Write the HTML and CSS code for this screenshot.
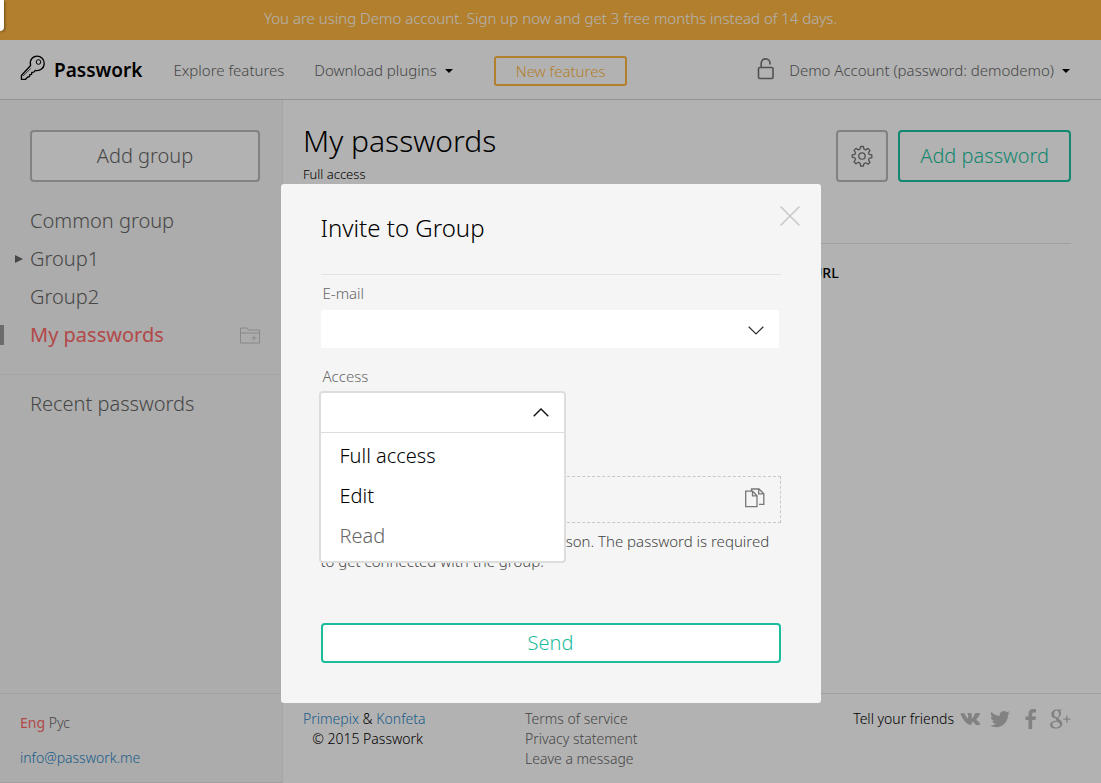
FILE: index.html
```html
<!DOCTYPE html>
<html lang="en">
<head>
<meta charset="utf-8">
<title>Passwork</title>
<link rel="stylesheet" href="styles.css">
</head>
<body>
<div class="promo">You are using Demo account. Sign up now and get 3 free months instead of 14 days.</div>

<header class="header">
  <a class="brand" href="#">
    <svg class="brand-icon" width="26" height="26" viewBox="0 0 26 26" fill="none" stroke="#000" stroke-width="1.3" stroke-linejoin="round"><path d="M10.600 10.500C9.200 5.500 12.500 1.200 17 1.200c4.200 0 7.200 3.100 7.200 7.200 0 4.800-4.200 8-8.900 6.900l-1.500 1.800-2 .2-.2 2.100-1.900.3-.2 2-1.800.3-2.100 2.300H1.400v-3.800z"/><circle cx="18.500" cy="7" r="2.300" stroke-width="1"/><path d="M10.800 13.300 3 21.200" stroke-width=".7"/></svg>
    <span>Passwork</span>
  </a>
  <nav class="nav">
    <a href="#">Explore features</a>
    <a class="with-caret" href="#">Download plugins</a>
  </nav>
  <a class="new-features" href="#">New features</a>
  <div class="account">
    <svg class="lock" width="18" height="22" viewBox="0 0 18 22" fill="none" stroke="#757575" stroke-width="1.600"><rect x="1.500" y="9.500" width="14.500" height="11" rx="1.200"/><path d="M4.200 9.500V5.300a4.400 4.400 0 0 1 8.800 0v1.300"/></svg>
    <a class="with-caret" href="#">Demo Account (password: demodemo)</a>
  </div>
</header>

<div class="body">
  <aside class="sidebar">
    <button class="btn add-group" type="button">Add group</button>
    <ul class="groups">
      <li><a href="#">Common group</a></li>
      <li class="has-children"><a href="#">Group1</a></li>
      <li><a href="#">Group2</a></li>
      <li class="active"><a href="#">My passwords</a>
        <button class="icon-button" type="button" aria-label="Add folder"><svg width="22" height="17" viewBox="0 0 22 17" fill="none" stroke="#c4c4c4"><path d="M1.500 16v-15h6.500l1.500 2h11v13z M1.500 6h19"/><path d="M12.500 11h5M15 8.500v5"/></svg></button>
      </li>
    </ul>
    <ul class="groups recent">
      <li><a href="#">Recent passwords</a></li>
    </ul>
  </aside>
  <main class="main">
    <div class="title-row">
      <div class="title-block">
        <h1>My passwords</h1>
        <p>Full access</p>
      </div>
      <button class="btn gear" type="button" aria-label="Group settings">
        <svg width="22" height="22" viewBox="0 0 22 22" fill="none" stroke="#757575" stroke-width="1.300" stroke-linejoin="round"><circle cx="11" cy="11" r="3.200"/><path d="M9.600 1.500h2.800l.6 2.700 1.700.7 2.300-1.500 2 2-1.500 2.300.7 1.700 2.600.5v2.800l-2.600.6-.7 1.700 1.500 2.300-2 2-2.300-1.500-1.700.7-.6 2.500H9.600L9 18l-1.700-.7L5 18.800l-2-2 1.500-2.300-.7-1.700-2.600-.6V9.900l2.600-.5.700-1.700L3 5.400l2-2 2.300 1.500L9 4.200z"/></svg>
      </button>
      <button class="btn btn-green" type="button">Add password</button>
    </div>
    <table class="passwords">
      <thead><tr><th>Name</th><th>Login</th><th>URL</th></tr></thead>
    </table>
  </main>
</div>

<footer class="footer">
  <div class="footer-side">
    <p class="langs"><a class="lang-active" href="#">Eng</a> <a href="#">Рус</a></p>
    <p><a class="blue" href="#">info@passwork.me</a></p>
  </div>
  <div class="footer-main">
    <div class="copyright"><a class="blue" href="#">Primepix</a> &amp; <a class="blue" href="#">Konfeta</a><br>© 2015 Passwork</div>
    <ul class="legal">
      <li><a href="#">Terms of service</a></li>
      <li><a href="#">Privacy statement</a></li>
      <li><a href="#">Leave a message</a></li>
    </ul>
    <div class="share">
      <span>Tell your friends</span>
      <a href="#" aria-label="VK"><svg width="20" height="14" viewBox="0 0 20 14"><path d="M9.700 12.800h1.200s.4 0 .6-.3c.2-.2.200-.6.200-.6s0-1.800.8-2.100 1.900 1.800 3 2.600c.9.600 1.500.5 1.500.5h2.100s1.500-.1.800-1.300c-.1-.1-.4-.9-2.200-2.500-1.800-1.700-1.600-1.400.6-4.400 1.300-1.800 1.900-2.900 1.700-3.300-.1-.4-1.200-.3-1.200-.3h-3s-.3 0-.5.1-.3.400-.3.400-.5 1.300-1.100 2.400C12.600 6.100 12.200 6.300 12 6.200c-.5-.3-.3-1.200-.3-1.900 0-2 .3-2.900-.6-3.100-.3-.1-.5-.1-1.300-.1-1 0-1.800 0-2.300.2-.3.200-.6.500-.4.500.2 0 .6.100.8.400.3.400.3 1.300.3 1.300s.2 2.400-.4 2.700c-.4.200-.9-.2-2-2.200-.6-1-1-2.100-1-2.100s-.1-.2-.3-.4c-.2-.1-.5-.2-.5-.2H1.200s-.4 0-.6.200c-.2.200 0 .5 0 .5s2.200 5.300 4.800 8c2.300 2.600 4.300 2.800 4.300 2.800z"/></svg></a>
      <a href="#" aria-label="Twitter"><svg width="20" height="18" viewBox="0 0 20 18"><path d="M20 2.900c-.7.300-1.500.5-2.400.6.900-.5 1.500-1.300 1.800-2.200-.8.500-1.700.8-2.600 1A4.100 4.100 0 0 0 9.800 6C6.400 5.900 3.400 4.200 1.400 1.800.3 3.600.8 6 2.700 7.200c-.7 0-1.300-.2-1.900-.5 0 2 1.400 3.700 3.300 4.100-.6.200-1.200.2-1.900.1.500 1.600 2 2.800 3.800 2.800A8.200 8.200 0 0 1 0 15.400a11.600 11.600 0 0 0 6.300 1.800c7.500 0 11.900-6.400 11.600-12.200.8-.6 1.500-1.300 2.100-2.100z"/></svg></a>
      <a href="#" aria-label="Facebook"><svg width="20" height="20" viewBox="-5 0 20 20"><path d="M3.500 20v-9H.5V7.500h3V5C3.500 1.800 5.300 0 8.200 0c1.300 0 2.500.1 2.800.2v3.300H9C7.500 3.500 7.200 4.200 7.200 5.300v2.200H11L10.500 11H7.200v9z"/></svg></a>
      <a href="#" aria-label="Google Plus"><svg width="21" height="20" viewBox="0 0 21 20"><path fill-rule="evenodd" d="M12 .5H6.800C3.800.5 1.300 2.400 1.300 5.200c0 2.700 2.100 4.400 4.900 4.300-.4.900-.2 1.600.5 2.200C2.800 11.800 0 13.300 0 15.700c0 2.500 2.700 3.900 6 3.900 3.800 0 6.300-2.100 6.300-4.800 0-2.200-1.200-3.300-3-4.500-1.200-.8-1.300-1.300-.3-2.100 1.300-1 2-2.200 2-3.700 0-1.300-.4-2.200-1.200-2.800h1.200zM6.500 1.500c2.900.3 3.700 6.500.5 6.900-3.300-.1-4.200-6.300-.5-6.900zM7.300 12.800c1.900 1.200 2.700 1.700 2.700 3 0 1.500-1.300 2.600-3.600 2.600-2.400 0-4-1.200-4-2.900 0-1.900 2.200-2.900 4.900-2.700z"/><path d="M16.200 6.500h1.300v3h3v1.300h-3v3h-1.300v-3h-3V9.500h3z"/></svg></a>
    </div>
  </div>
</footer>

<div class="overlay">
  <form class="modal" role="dialog" aria-labelledby="modal-title">
    <button class="close" type="button" aria-label="Close"><svg width="20" height="20" viewBox="0 0 20 20" stroke="#c5c5c5" stroke-width="1.400"><path d="M.5.500l19 19M19.500.500l-19 19"/></svg></button>
    <h2 id="modal-title">Invite to Group</h2>
    <label for="email">E-mail</label>
    <div class="email-box">
      <input id="email" type="text">
      <button class="icon-button" type="button" aria-label="Show contacts"><svg width="16" height="11" viewBox="0 0 16 11" fill="none" stroke="#333" stroke-width="1.300"><path d="M.7 2.700 8 9.900l7.300-7.200"/></svg></button>
    </div>
    <label for="access">Access</label>
    <div class="access">
      <div class="access-menu">
        <div class="access-head">
          <select id="access"><option></option><option>Full access</option><option>Edit</option><option>Read</option></select>
          <svg width="16" height="9" viewBox="0 0 16 9" fill="none" stroke="#111" stroke-width="1.400"><path d="M.7 8.300 8 1.100l7.300 7.200"/></svg>
        </div>
        <ul role="listbox" aria-label="Access">
          <li role="option">Full access</li>
          <li role="option">Edit</li>
          <li role="option" class="muted">Read</li>
        </ul>
      </div>
    </div>
    <div class="secret">
      <button class="icon-button" type="button" aria-label="Copy"><svg width="20" height="20" viewBox="0 0 20 20" fill="none" stroke="#777" stroke-width="1.300"><path d="M.7 3.200h7l4.300 4.500v10.900H.7zM7.500 3.200v4.700H12M6.500 3V1H14l4.800 4.800v10.500H14M13.700 1v4.900h5"/></svg></button>
    </div>
    <p class="hint">Send the password to an invited person. The password is required to get connected with the group.</p>
    <button class="send" type="submit">Send</button>
  </form>
</div>
<div class="corner-tab"></div>
</body>
</html>
```
FILE: styles.css
```css
* { box-sizing: border-box; }

body {
  margin: 0;
  min-height: 100vh;
  display: flex;
  flex-direction: column;
  background: #fff;
  color: #000;
  font: 300 15px/20px "Noto Sans", sans-serif;
}

a { color: #666; text-decoration: none; }
button, input, select { font: inherit; color: inherit; }
button { cursor: pointer; }
h1, h2, p, ul { margin: 0; padding: 0; font-weight: 300; }
ul { list-style: none; }
svg { display: block; }

.blue { color: #2a86c8; }

.promo {
  padding: 8px 20px 12px;
  background: #ffb740;
  color: #fff;
  text-align: center;
}

.header {
  display: flex;
  align-items: center;
  height: 60px;
  padding: 0 31px 0 20px;
  border-bottom: 1px solid #d4d4d4;
}

.brand {
  display: flex;
  align-items: center;
  gap: 8px;
  color: #000;
  font-size: 19px;
  font-weight: 600;
}

.brand-icon { margin-bottom: 4px; }

.nav { display: flex; gap: 30px; margin-left: 31px; }

.with-caret { display: flex; align-items: center; gap: 8px; }
.with-caret::after {
  content: "";
  margin-top: 3px;
  border: 4px solid transparent;
  border-top-color: #000;
  border-bottom: 0;
}

.new-features {
  margin: 2px 0 0 41px;
  padding: 3px 20px;
  border: 2px solid #ffb740;
  border-radius: 3px;
  color: #ffb740;
}

.account { display: flex; align-items: center; gap: 14px; margin-left: auto; }
.lock { margin-bottom: 2px; }

.body { flex: 1; display: flex; }

.sidebar {
  width: 283px;
  padding-top: 30px;
  background: #f6f6f6;
  border-right: 1px solid #ededed;
}

.btn {
  height: 52px;
  background: #fff;
  border: 2px solid #bababa;
  border-radius: 4px;
  color: #666;
  font-size: 20px;
}

.add-group { display: block; width: 230px; margin: 0 0 20px 30px; }

.groups { padding-bottom: 20px; font-size: 20px; line-height: 38px; }
.groups li { position: relative; display: flex; align-items: center; padding: 0 21px 0 30px; }
.groups a { flex: 1; }
.groups .active a { color: #ff6969; font-weight: 400; }
.groups .active::before {
  content: "";
  position: absolute;
  left: 0;
  width: 4px;
  height: 20px;
  background: #9b9b9b;
}
.has-children::before {
  content: "";
  position: absolute;
  left: 15px;
  border: 4px solid transparent;
  border-left: 8px solid #666;
  border-right: 0;
}
.recent { padding-top: 10px; border-top: 1px solid #ededed; }

.icon-button { padding: 0; border: 0; background: none; }

.main { flex: 1; padding: 30px 30px 0 20px; }

.title-row { display: flex; gap: 10px; padding-bottom: 61px; border-bottom: 1px solid #e6e6e6; }
.title-block { flex: 1; height: 52px; }
.title-block h1 { font-size: 30px; line-height: 22px; }
.title-block p { margin-top: 12px; font-size: 13px; }
.gear { width: 52px; display: flex; align-items: center; justify-content: center; }
.btn-green { padding: 0 20px; border-color: #1cc29f; color: #1cc29f; }

.passwords { width: 100%; border-spacing: 0; table-layout: fixed; }
.passwords th { padding: 19px 0; font-size: 14px; font-weight: 500; text-align: left; }
.passwords th:last-child { width: 259px; }

.footer { display: flex; height: 90px; font-size: 14px; border-top: 1px solid #e6e6e6; }
.footer-side {
  width: 283px;
  padding: 19px 20px;
  background: #f6f6f6;
  border-right: 1px solid #ededed;
  border-bottom: 1px solid #e6e6e6;
}
.langs { margin-bottom: 15px; }
.langs .lang-active { color: #ff6969; font-weight: 400; }
.footer-main { flex: 1; display: flex; align-items: flex-start; padding: 15px 30px 0 20px; }
.copyright { width: 120px; text-align: right; white-space: nowrap; }
.legal { margin-left: 102px; }
.share { display: flex; align-items: center; gap: 10px; margin-left: auto; }
.share span { margin-right: -4px; }
.share svg { fill: #bababa; }

.overlay {
  position: fixed;
  inset: 0;
  padding-top: 184px;
  background: rgba(0, 0, 0, 0.3);
}

.modal {
  position: relative;
  width: 540px;
  margin: 0 auto;
  padding: 29px 40px 40px;
  background: #f5f5f5;
  border-radius: 3px;
}

.close { position: absolute; top: 22px; right: 21px; padding: 0; border: 0; background: none; }

.modal h2 {
  margin-bottom: 8px;
  padding-bottom: 31px;
  border-bottom: 1px solid #e2e2e2;
  font-size: 24px;
  line-height: 30px;
}

.modal label { display: block; margin-left: 2px; color: #666; }

.email-box {
  display: flex;
  align-items: center;
  margin: 7px 2px 18px 0;
  padding-right: 15px;
  background: #fff;
  border-radius: 2px;
}
.email-box input { flex: 1; height: 38px; padding: 0 20px; border: 0; background: none; outline: 0; }

.access { position: relative; height: 90px; }
.access-menu {
  position: absolute;
  top: 5px;
  left: -2px;
  width: 247px;
  background: #fff;
  border: 2px solid #ddd;
  border-radius: 4px;
}
.access-head { position: relative; border-bottom: 1px solid #ddd; }
.access-head select {
  display: block;
  width: 100%;
  height: 39px;
  padding: 0 20px;
  border: 0;
  background: none;
  appearance: none;
}
.access-head svg { position: absolute; top: 15px; right: 15px; pointer-events: none; }
.access-menu ul { padding: 3px 0 5px; font-size: 20px; line-height: 40px; }
.access-menu li { padding: 0 19px; }
.access-menu .muted { color: #666; }

.secret {
  display: flex;
  align-items: center;
  justify-content: flex-end;
  height: 47px;
  padding: 0 15px 4px 0;
  border: 1px dashed #c8c8c8;
}

.hint { margin: 8px 0 52px; color: #444; }

.send {
  display: block;
  width: 100%;
  height: 40px;
  padding: 0;
  background: #fff;
  border: 2px solid #1abc9c;
  border-radius: 4px;
  color: #1abc9c;
  font-size: 20px;
}

.corner-tab {
  position: fixed;
  top: 0;
  left: 0;
  width: 4px;
  height: 31px;
  background: #fff;
  border-radius: 0 0 4px 0;
  box-shadow: 1px 1px 3px rgba(0, 0, 0, 0.4);
}
```
